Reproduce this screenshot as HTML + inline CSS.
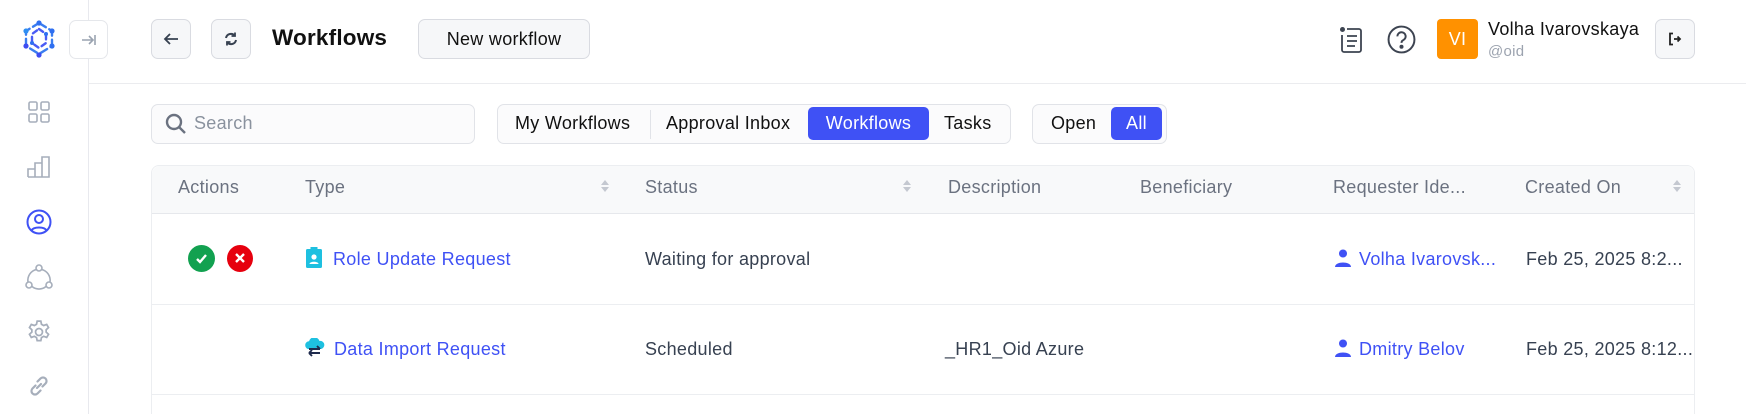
<!DOCTYPE html>
<html style="width:1746px;height:414px;overflow:hidden"><head><meta charset="utf-8"><style>
*{box-sizing:border-box;margin:0;padding:0}
body{width:1746px;height:414px;overflow:hidden;background:#fff;font-family:"Liberation Sans",Arial,sans-serif;color:#1f2937;position:relative;letter-spacing:0.3px}
.abs{position:absolute}
.btn{position:absolute;border:1px solid #d9dbe1;border-radius:7px;background:#f6f7f9;display:flex;align-items:center;justify-content:center}
.th{position:absolute;top:177px;font-size:18px;color:#6b7280}
.td{position:absolute;font-size:18px;color:#374151}
.link{color:#3f51f5}
.sort{position:absolute;top:180px;width:8px}
.sort:before{content:"";position:absolute;left:0;top:0;border:4px solid transparent;border-bottom:5px solid #c4c8d0;border-top:0}
.sort:after{content:"";position:absolute;left:0;top:7px;border:4px solid transparent;border-top:5px solid #c4c8d0;border-bottom:0}
.f{font-size:18px;color:#111}
</style></head><body>
<div class="abs" style="left:88px;top:0;width:1px;height:414px;background:#e8e9ee"></div>
<svg class="abs" style="left:19px;top:19px" width="40" height="40" viewBox="0 0 40 40">
<g fill="none" stroke-width="2.4" stroke-linecap="round">
<path d="M20 4 L33 12 L33 27 L20 35 L7 27 L7 12 Z" stroke="#3a7df0" stroke-dasharray="8 4"/>
<path d="M20 10 L27 15 L27 24 L20 29 L13 24 L13 15 Z" stroke="#4a5cf5" stroke-dasharray="5 4"/>
</g>
<g fill="#2f6ff0"><circle cx="20" cy="4" r="2.6"/><circle cx="33" cy="12" r="2.6"/><circle cx="33" cy="27" r="2.6"/><circle cx="20" cy="36" r="2.6" fill="#3d4cf2"/><circle cx="7" cy="27" r="2.6" fill="#3d4cf2"/><circle cx="7" cy="12" r="2.6" fill="#2e8ef2"/><circle cx="27" cy="15" r="2"/><circle cx="13" cy="24" r="2"/></g>
</svg>
<div class="btn" style="left:69px;top:20px;width:39px;height:39px;background:#fff;border-color:#e5e7eb">
<svg width="18" height="14" viewBox="0 0 18 14"><path d="M2 7h11M9 3l4 4-4 4M15 2v10" stroke="#9aa3b0" stroke-width="1.6" fill="none"/></svg></div>
<svg class="abs" style="left:27px;top:100px" width="24" height="24" viewBox="0 0 24 24" fill="none" stroke="#a6aebb" stroke-width="1.6"><rect x="2" y="2" width="8" height="8" rx="1.5"/><rect x="14" y="2" width="8" height="8" rx="1.5"/><rect x="2" y="14" width="8" height="8" rx="1.5"/><rect x="14" y="14" width="8" height="8" rx="1.5"/></svg>
<svg class="abs" style="left:26px;top:155px" width="26" height="24" viewBox="0 0 26 24" fill="none" stroke="#a6aebb" stroke-width="1.6"><path d="M2 22V14h7v8M9 22V8h7v14M16 22V2h7v20H2"/></svg>
<svg class="abs" style="left:26px;top:209px" width="26" height="26" viewBox="0 0 26 26" fill="none" stroke="#3f51f5" stroke-width="2"><circle cx="13" cy="13" r="11.5"/><circle cx="13" cy="10" r="4"/><path d="M5.5 21.5c2-4 13-4 15 0"/></svg>
<svg class="abs" style="left:25px;top:264px" width="28" height="26" viewBox="0 0 28 26" fill="none" stroke="#a6aebb" stroke-width="1.6"><circle cx="14" cy="4" r="3"/><circle cx="4" cy="21" r="3"/><circle cx="24" cy="21" r="3"/><path d="M11.5 5.5A11 11 0 0 0 3 18M16.5 5.5A11 11 0 0 1 25 18M7 22.5a11 11 0 0 0 14 0"/></svg>
<svg class="abs" style="left:26px;top:319px" width="26" height="26" viewBox="0 0 24 24" fill="none" stroke="#a6aebb" stroke-width="1.6"><circle cx="12" cy="12" r="3.2"/><path d="M10.3 2h3.4l.6 2.9 2 1.1 2.8-1 1.7 2.9-2.2 2v2.2l2.2 2-1.7 2.9-2.8-1-2 1.1-.6 2.9h-3.4l-.6-2.9-2-1.1-2.8 1-1.7-2.9 2.2-2v-2.2l-2.2-2 1.7-2.9 2.8 1 2-1.1z"/></svg>
<svg class="abs" style="left:27px;top:374px" width="24" height="24" viewBox="0 0 24 24" fill="none" stroke="#a6aebb" stroke-width="2.2" stroke-linecap="round"><path d="M10 14l4-4M8.5 11.5l-3 3a3.5 3.5 0 0 0 5 5l3-3M15.5 12.5l3-3a3.5 3.5 0 0 0-5-5l-3 3"/></svg>

<div class="abs" style="left:89px;top:83px;width:1657px;height:1px;background:#ebecef"></div>
<div class="btn" style="left:151px;top:19px;width:40px;height:40px">
<svg width="18" height="14" viewBox="0 0 18 14"><path d="M16 7H3M8 2L3 7l5 5" stroke="#374151" stroke-width="1.8" fill="none"/></svg></div>
<div class="btn" style="left:211px;top:19px;width:40px;height:40px">
<svg width="16" height="16" viewBox="0 0 16 16" fill="none" stroke="#374151" stroke-width="2"><path d="M3 7a5 5 0 0 1 9-2M13 9a5 5 0 0 1-9 2"/><path d="M12 1.5v3.5H8.5M4 14.5V11h3.5" stroke-width="1.8"/></svg></div>
<div class="abs" style="left:272px;top:25px;font-size:22.5px;font-weight:bold;color:#111;letter-spacing:0.2px">Workflows</div>
<div class="btn" style="left:418px;top:19px;width:172px;height:40px;font-size:18px;color:#111">New workflow</div>

<svg class="abs" style="left:1339px;top:26px" width="24" height="28" viewBox="0 0 24 28" fill="none" stroke="#3d4451" stroke-width="1.8"><circle cx="3.5" cy="3.5" r="2.5" fill="#3d4451" stroke="none"/><path d="M8 3h12a2 2 0 0 1 2 2v19a2 2 0 0 1-2 2H5a2 2 0 0 1-2-2V9"/><path d="M8 10h10M8 15h10M8 20h8"/></svg>
<svg class="abs" style="left:1387px;top:25px" width="29" height="29" viewBox="0 0 28 28" fill="none" stroke="#3d4451" stroke-width="1.9"><circle cx="14" cy="14" r="12.5"/><path d="M10 11a4 4 0 1 1 5.5 3.7c-1 .5-1.5 1.3-1.5 2.5"/><circle cx="14" cy="21" r="1" fill="#3d4451"/></svg>
<div class="abs" style="left:1437px;top:19px;width:41px;height:40px;background:#ff9100;border-radius:4px;color:#fff;font-size:18px;display:flex;align-items:center;justify-content:center">VI</div>
<div class="abs" style="left:1488px;top:19px;font-size:18px;color:#111">Volha Ivarovskaya</div>
<div class="abs" style="left:1488px;top:43px;font-size:15px;color:#9ca3af">@oid</div>
<div class="btn" style="left:1655px;top:19px;width:40px;height:40px">
<svg width="14" height="14" viewBox="0 0 14 14" fill="none" stroke="#222" stroke-width="1.8"><path d="M5 1.5H2v11h3"/><path d="M6 7h6M9.5 4.5L12 7l-2.5 2.5"/></svg></div>

<div class="abs" style="left:151px;top:104px;width:324px;height:40px;border:1px solid #e1e3e8;border-radius:7px;background:#fbfbfc"></div>
<svg class="abs" style="left:165px;top:113px" width="22" height="22" viewBox="0 0 22 22" fill="none" stroke="#6b7280" stroke-width="2.4"><circle cx="9" cy="9" r="7"/><path d="M14 14l6 6"/></svg>
<div class="abs" style="left:194px;top:113px;font-size:18px;color:#8a929e">Search</div>

<div class="abs" style="left:497px;top:104px;width:514px;height:40px;border:1px solid #e1e3e8;border-radius:7px;background:#fbfbfc"></div>
<div class="abs" style="left:650px;top:110px;width:1px;height:29px;background:#e1e3e8"></div>
<div class="abs f" style="left:515px;top:113px">My Workflows</div>
<div class="abs f" style="left:666px;top:113px">Approval Inbox</div>
<div class="abs" style="left:808px;top:107px;width:121px;height:33px;background:#3f51f5;border-radius:5px;color:#fff;font-size:18px;display:flex;align-items:center;justify-content:center">Workflows</div>
<div class="abs f" style="left:944px;top:113px">Tasks</div>

<div class="abs" style="left:1032px;top:104px;width:135px;height:40px;border:1px solid #e1e3e8;border-radius:7px;background:#fbfbfc"></div>
<div class="abs f" style="left:1051px;top:113px">Open</div>
<div class="abs" style="left:1111px;top:107px;width:51px;height:33px;background:#3f51f5;border-radius:5px;color:#fff;font-size:18px;display:flex;align-items:center;justify-content:center">All</div>

<div class="abs" style="left:151px;top:165px;width:1544px;height:260px;border:1px solid #eceef1;border-bottom:0;border-radius:8px 8px 0 0;background:#fff"></div>
<div class="abs" style="left:152px;top:166px;width:1542px;height:48px;background:#f8f9fa;border-radius:8px 8px 0 0;border-bottom:1px solid #e6e8ec"></div>
<div class="th" style="left:178px">Actions</div>
<div class="th" style="left:305px">Type</div><div class="sort" style="left:601px"></div>
<div class="th" style="left:645px">Status</div><div class="sort" style="left:903px"></div>
<div class="th" style="left:948px">Description</div>
<div class="th" style="left:1140px">Beneficiary</div>
<div class="th" style="left:1333px">Requester Ide...</div>
<div class="th" style="left:1525px">Created On</div><div class="sort" style="left:1673px"></div>
<div class="abs" style="left:152px;top:304px;width:1542px;height:1px;background:#eceef1"></div>
<div class="abs" style="left:152px;top:394px;width:1542px;height:1px;background:#eceef1"></div>

<div class="abs" style="left:188px;top:245px;width:27px;height:27px;border-radius:50%;background:#12a150"></div>
<svg class="abs" style="left:194px;top:251px" width="15" height="15" viewBox="0 0 15 15"><path d="M3 8l3 3 6-7" stroke="#fff" stroke-width="2.4" fill="none"/></svg>
<div class="abs" style="left:227px;top:245px;width:26px;height:27px;border-radius:50%;background:#e6000e"></div>
<svg class="abs" style="left:233px;top:251px" width="14" height="14" viewBox="0 0 14 14"><path d="M3 3l8 8M11 3l-8 8" stroke="#fff" stroke-width="2.4"/></svg>
<svg class="abs" style="left:306px;top:247px" width="16" height="21" viewBox="0 0 16 21"><rect x="4.5" y="0" width="7" height="3" fill="#1ec0e0"/><rect x="0" y="2" width="16" height="19" rx="1.5" fill="#1ec0e0"/><circle cx="8" cy="10" r="2.6" fill="#fff"/><path d="M3.5 17c0-3 9-3 9 0z" fill="#fff"/></svg>
<div class="td link" style="left:333px;top:249px">Role Update Request</div>
<div class="td" style="left:645px;top:249px">Waiting for approval</div>
<svg class="abs" style="left:1335px;top:249px" width="16" height="18" viewBox="0 0 16 18" fill="#3f51f5"><circle cx="8" cy="4.5" r="4"/><path d="M0 18c0-6 16-6 16 0z"/></svg>
<div class="td link" style="left:1359px;top:249px">Volha Ivarovsk...</div>
<div class="td" style="left:1526px;top:249px">Feb 25, 2025 8:2...</div>

<svg class="abs" style="left:304px;top:338px" width="21" height="20" viewBox="0 0 21 20"><path d="M4 11a4 4 0 0 1 1-7.8A5.5 5.5 0 0 1 15.5 3 4 4 0 0 1 17 11z" fill="#1ec0e0"/><path d="M5 11h11M13 8l3 3M16 15H5M8 12l-3 3M8 18l-3-3" stroke="#1f2b4d" stroke-width="1.9" fill="none"/></svg>
<div class="td link" style="left:334px;top:339px">Data Import Request</div>
<div class="td" style="left:645px;top:339px">Scheduled</div>
<div class="td" style="left:945px;top:339px">_HR1_Oid Azure</div>
<svg class="abs" style="left:1335px;top:339px" width="16" height="18" viewBox="0 0 16 18" fill="#3f51f5"><circle cx="8" cy="4.5" r="4"/><path d="M0 18c0-6 16-6 16 0z"/></svg>
<div class="td link" style="left:1359px;top:339px">Dmitry Belov</div>
<div class="td" style="left:1526px;top:339px">Feb 25, 2025 8:12...</div>
</body></html>
